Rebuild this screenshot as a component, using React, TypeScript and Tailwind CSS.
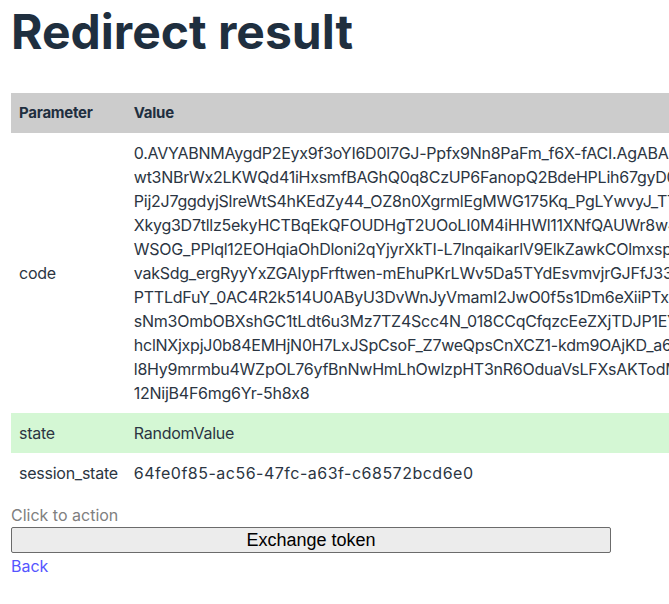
const codeLines = [
  "0.AVYABNMAygdP2Eyx9f3oYI6D0l7GJ-Ppfx9Nn8PaFm_f6X-fACI.AgABAAQAAAD",
  "wt3NBrWx2LKWQd41iHxsmfBAGhQ0q8CzUP6FanopQ2BdeHPLih67gyD0cXq9",
  "Pij2J7ggdyjSlreWtS4hKEdZy44_OZ8n0XgrmlEgMWG175Kq_PgLYwvyJ_TTq2",
  "Xkyg3D7tllz5ekyHCTBqEkQFOUDHgT2UOoLI0M4iHHWl11XNfQAUWr8w4kP",
  "WSOG_PPlql12EOHqiaOhDloni2qYjyrXkTI-L7lnqaikarlV9ElkZawkCOlmxspQ",
  "vakSdg_ergRyyYxZGAlypFrftwen-mEhuPKrLWv5Da5TYdEsvmvjrGJFfJ33Zk",
  "PTTLdFuY_0AC4R2k514U0AByU3DvWnJyVmamI2JwO0f5s1Dm6eXiiPTxr_Hb",
  "sNm3OmbOBXshGC1tLdt6u3Mz7TZ4Scc4N_018CCqCfqzcEeZXjTDJP1EYw",
  "hclNXjxpjJ0b84EMHjN0H7LxJSpCsoF_Z7weQpsCnXCZ1-kdm9OAjKD_a6Rt",
  "l8Hy9mrmbu4WZpOL76yfBnNwHmLhOwlzpHT3nR6OduaVsLFXsAKTodMhZ",
  "12NijB4F6mg6Yr-5h8x8",
];

export default function App() {
  return (
    <div className="w-[669px] h-[604px] overflow-hidden bg-white px-[11px] font-['Inter',sans-serif] text-[16px] text-[#2b3542] [font-feature-settings:'calt'_0]">
      <h1 className="mt-[8px] text-[48px] leading-[48px] font-bold text-[#1f2f3f]">
        Redirect result
      </h1>

      <table className="mt-[37px] border-collapse text-left tracking-[-0.25px]">
        <thead>
          <tr className="bg-[#cccccc] text-[#1f2f3f]">
            <th className="h-[40px] px-[8px] text-[15px] font-bold whitespace-nowrap">Parameter</th>
            <th className="h-[40px] px-[8px] pr-[200px] text-[15px] font-bold">Value</th>
          </tr>
        </thead>
        <tbody>
          <tr>
            <td className="px-[8px] align-middle">code</td>
            <td className="px-[8px] py-[8px] leading-[24px]">
              {codeLines.map((line) => (
                <div key={line} className="whitespace-nowrap">
                  {line}
                </div>
              ))}
            </td>
          </tr>
          <tr className="bg-[#d4f7d4]">
            <td className="px-[8px] py-[8px] leading-[24px] whitespace-nowrap">state</td>
            <td className="px-[8px] py-[8px] leading-[24px] whitespace-nowrap">RandomValue</td>
          </tr>
          <tr>
            <td className="px-[8px] py-[8px] leading-[24px] whitespace-nowrap">session_state</td>
            <td className="px-[8px] py-[8px] leading-[24px] whitespace-nowrap tracking-[0.5px]">
              64fe0f85-ac56-47fc-a63f-c68572bcd6e0
            </td>
          </tr>
        </tbody>
      </table>

      <div className="mt-[10px] leading-[24px] text-[#808080]">Click to action</div>
      <button className="block w-[600px] h-[26px] bg-[#ececec] border border-[#6b6b6b] rounded-[2px] font-['Liberation_Sans',Arial,sans-serif] text-[18px] leading-[20px] text-black">
        Exchange token
      </button>
      <a href="#" className="block mt-[1px] leading-[24px] text-[#5555ff]">
        Back
      </a>
    </div>
  );
}
